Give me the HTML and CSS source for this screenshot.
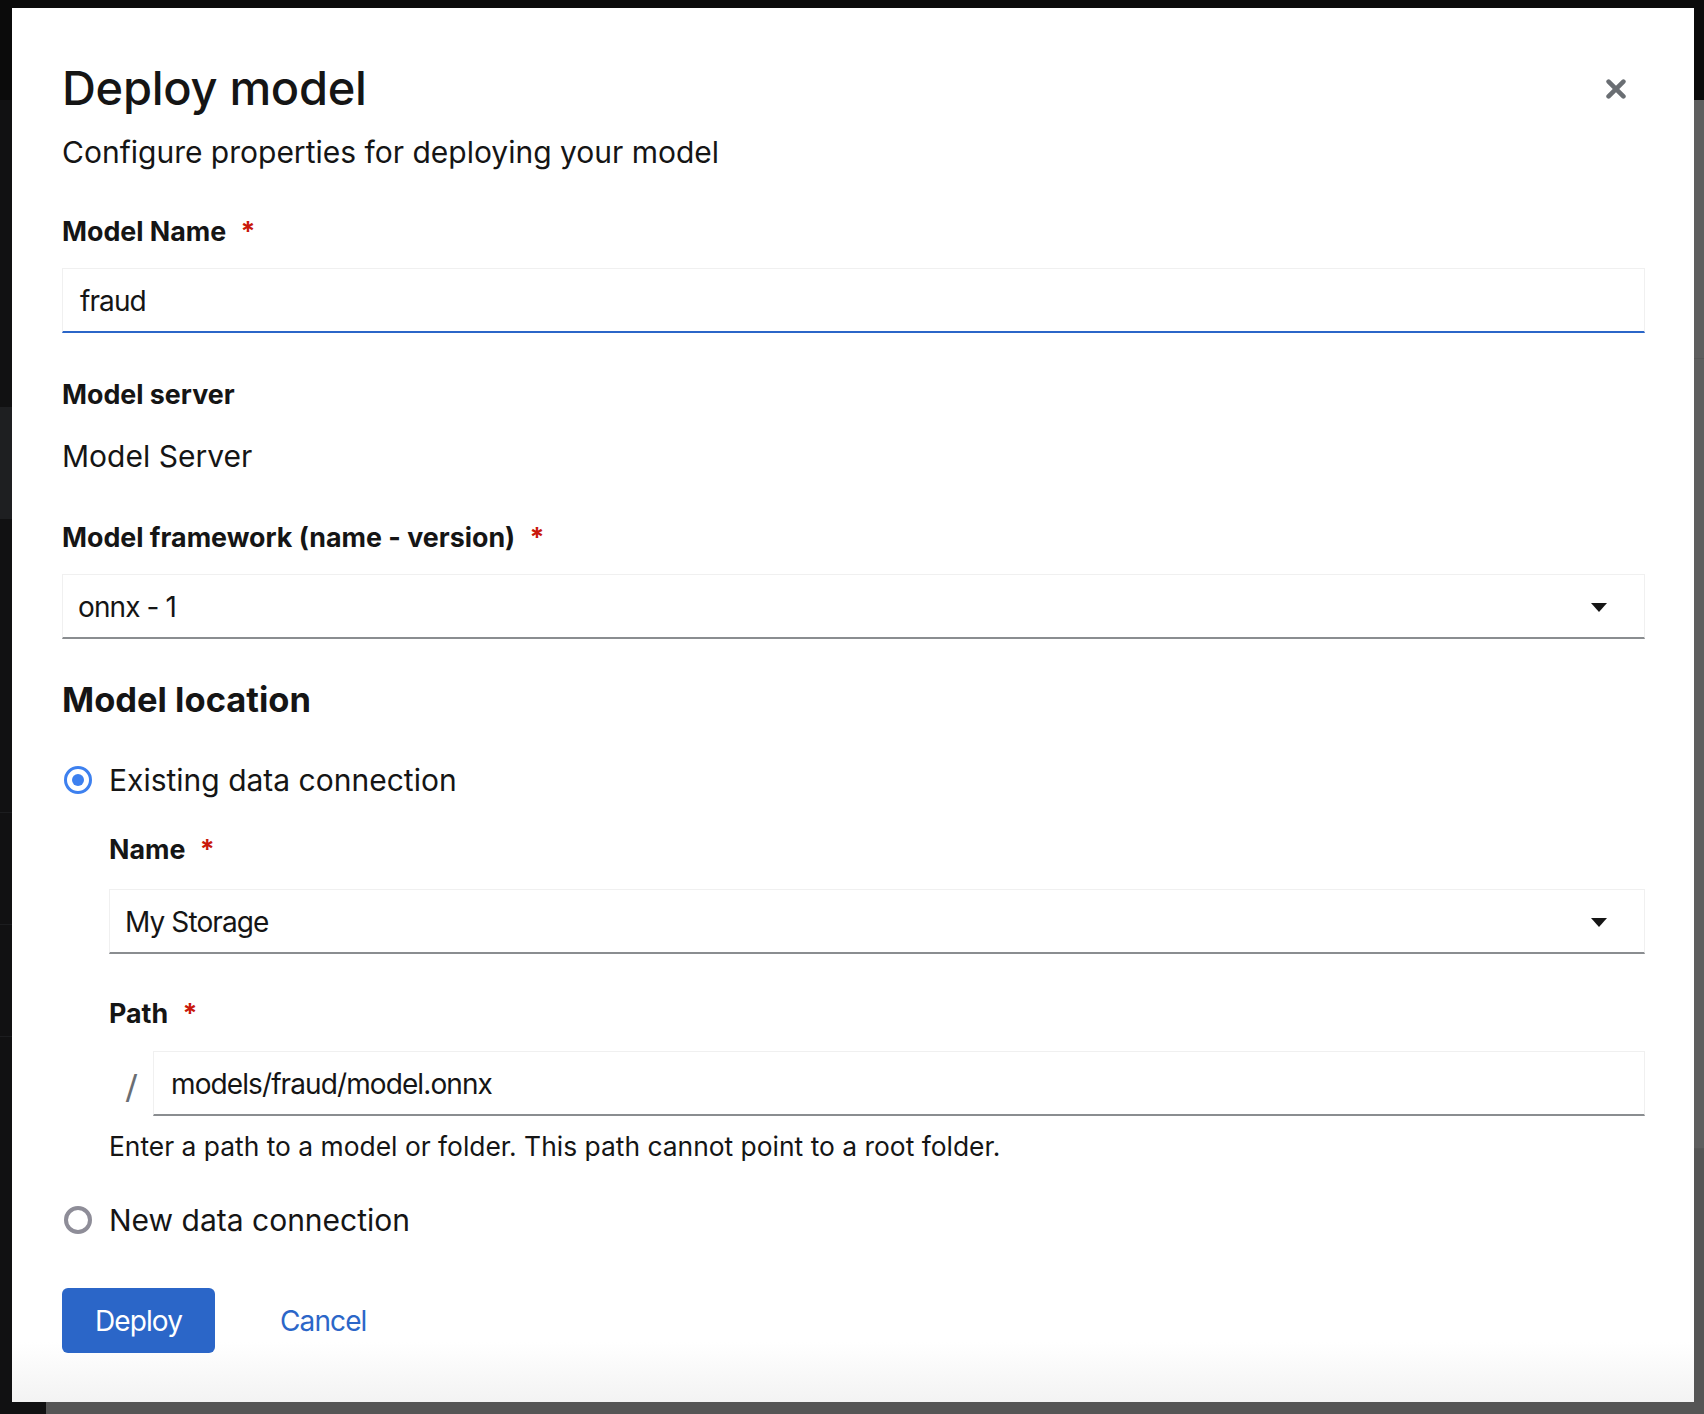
FILE: index.html
```html
<!DOCTYPE html>
<html lang="en">
<head>
<meta charset="utf-8">
<title>Deploy model</title>
<link rel="stylesheet" href="styles.css">
</head>
<body>
<div class="backdrop">
  <div class="topbar"></div>
  <div class="main">
    <div class="sidebar">
      <div class="nav-gap"></div>
      <div class="nav-active"></div>
      <div class="nav-gap2"></div>
      <div class="nav-item"></div>
      <div class="nav-item"></div>
    </div>
    <div class="content">
      <div class="row-a"></div>
      <div class="row-b"></div>
      <div class="row-c"></div>
    </div>
  </div>
</div>

<div class="modal" role="dialog" aria-labelledby="modal-title">
  <header class="modal-header">
    <div class="heading-block">
      <h1 class="modal-title" id="modal-title">Deploy model</h1>
      <p class="modal-desc">Configure properties for deploying your model</p>
    </div>
    <button class="close-btn" aria-label="Close">
      <svg width="20" height="20" viewBox="0 0 20 20"><path d="M2.6 2.6 L17.4 17.4 M17.4 2.6 L2.6 17.4" stroke="#6a6e73" stroke-width="4.6" stroke-linecap="round" fill="none"/></svg>
    </button>
  </header>

  <div class="form">
    <div class="label label-first">Model Name <span class="req">*</span></div>
    <div class="field focused">fraud</div>

    <div class="label label-gap">Model server</div>
    <div class="static-text">Model Server</div>

    <div class="label label-gap">Model framework (name - version) <span class="req">*</span></div>
    <div class="field select">
      <span>onnx - 1</span>
      <svg class="caret" width="16" height="9" viewBox="0 0 16 9"><path d="M0 0 H16 L8 9 Z" fill="#151515"/></svg>
    </div>

    <h2 class="section-title">Model location</h2>

    <div class="radio-row radio-first">
      <span class="radio checked"></span>
      <span class="radio-label">Existing data connection</span>
    </div>

    <div class="nested">
      <div class="label nested-label">Name <span class="req">*</span></div>
      <div class="field select nested-select">
        <span>My Storage</span>
        <svg class="caret" width="16" height="9" viewBox="0 0 16 9"><path d="M0 0 H16 L8 9 Z" fill="#151515"/></svg>
      </div>

      <div class="label label-gap-path">Path <span class="req">*</span></div>
      <div class="path-row">
        <span class="slash">/</span>
        <div class="field path-field">models/fraud/model.onnx</div>
      </div>
      <div class="helper">Enter a path to a model or folder. This path cannot point to a root folder.</div>
    </div>

    <div class="radio-row radio-second">
      <span class="radio"></span>
      <span class="radio-label">New data connection</span>
    </div>

    <div class="actions">
      <button class="btn btn-primary">Deploy</button>
      <button class="btn btn-link">Cancel</button>
    </div>
  </div>
</div>
</body>
</html>
```

FILE: styles.css
```css
* { box-sizing: border-box; }

html, body {
  margin: 0;
  padding: 0;
}

body {
  width: 1704px;
  height: 1414px;
  overflow: hidden;
  position: relative;
  background: #0b0b0b;
  font-family: Inter, "Noto Sans", sans-serif;
  color: #151515;
}

/* ---------- page behind the backdrop ---------- */
.backdrop {
  display: flex;
  flex-direction: column;
  height: 100%;
}

.topbar {
  height: 100px;
  background: #0b0b0b;
}

.main {
  flex: 1;
  display: flex;
}

.sidebar {
  width: 46px;
  background: #111112;
  display: flex;
  flex-direction: column;
}

.nav-gap { height: 307px; }
.nav-active { height: 112px; background: #1e1f21; }
.nav-gap2 { height: 294px; border-bottom: 1px solid #1c1d1f; }
.nav-item { height: 112px; border-bottom: 1px solid #1c1d1f; }

.content {
  flex: 1;
  background: #5e5e5e;
  display: flex;
  flex-direction: column;
}

.row-a { height: 259px; border-bottom: 1px solid #575757; }
.row-b { height: 790px; border-bottom: 1px solid #575757; }
.row-c { flex: 1; background: #555555; }

/* ---------- modal ---------- */
.modal {
  position: absolute;
  left: 12px;
  top: 8px;
  width: 1682px;
  height: 1394px;
  padding: 50px 49px 49px 50px;
  background: linear-gradient(to bottom, #ffffff calc(100% - 60px), #f3f3f3 100%);
  display: flex;
  flex-direction: column;
}

.modal-header {
  display: flex;
  justify-content: space-between;
  align-items: flex-start;
}

.modal-title {
  margin: 0;
  font-size: 47px;
  line-height: 60px;
  font-weight: 500;
  letter-spacing: -0.3px;
}

.modal-desc {
  margin: 14px 0 0;
  font-size: 30px;
  line-height: 40px;
  font-weight: 400;
}

.close-btn {
  width: 40px;
  height: 40px;
  margin: 11px 9px 0 0;
  padding: 0;
  border: 0;
  background: transparent;
  display: flex;
  align-items: center;
  justify-content: center;
}

/* ---------- form ---------- */
.form {
  display: flex;
  flex-direction: column;
}

.label {
  font-size: 26.8px;
  line-height: 36px;
  font-weight: 700;
}

.label-first { margin-top: 41px; }
.label-gap { margin-top: 43px; }

.req {
  color: #c9190b;
  margin-left: 8px;
}

.field {
  height: 65px;
  margin-top: 19px;
  padding: 12px 17px 10px;
  border: 1px solid #f0f0f0;
  border-bottom: 2px solid #8a8d90;
  font-size: 28px;
  letter-spacing: -0.9px;
  line-height: 40px;
  background: #fff;
}

.field.focused {
  border-bottom-color: #2b66c8;
}

.select {
  display: flex;
  align-items: center;
  justify-content: space-between;
  padding-left: 15px;
  padding-right: 37px;
}

.static-text {
  margin-top: 24px;
  font-size: 30px;
  line-height: 40px;
}

.section-title {
  margin: 39px 0 0;
  font-size: 34.5px;
  line-height: 44px;
  font-weight: 700;
}

.radio-row {
  display: flex;
  align-items: center;
  height: 40px;
}

.radio-first { margin-top: 38px; }
.radio-second { margin-top: 36px; }

.radio {
  width: 28px;
  height: 28px;
  margin-left: 2px;
  margin-right: 17px;
  border-radius: 50%;
  border: 4px solid #8e8d98;
  background: #fff;
  display: flex;
  align-items: center;
  justify-content: center;
  flex: none;
}

.radio.checked {
  border: 3.8px solid #3d80ef;
}

.radio.checked::after {
  content: "";
  width: 12px;
  height: 12px;
  border-radius: 50%;
  background: #3d80ef;
}

.radio-label {
  font-size: 30px;
  line-height: 40px;
}

.nested {
  margin-left: 47px;
  display: flex;
  flex-direction: column;
}

.nested-label { margin-top: 31px; }
.nested-select { margin-top: 22px; }
.label-gap-path { margin-top: 41px; }

.path-row {
  display: flex;
  align-items: stretch;
  margin-top: 20px;
}

.slash {
  width: 44px;
  flex: none;
  display: flex;
  align-items: center;
  justify-content: center;
  font-family: "DejaVu Sans", sans-serif;
  font-size: 34px;
  font-weight: 400;
  color: #6a6e73;
  padding-top: 6px;
  padding-left: 1px;
}

.path-field {
  flex: 1;
  margin-top: 0;
}

.helper {
  margin-top: 12px;
  font-size: 26.4px;
  line-height: 36px;
}

.actions {
  display: flex;
  margin-top: 48px;
  gap: 32px;
}

.btn {
  height: 65px;
  padding: 0 33px;
  border: 0;
  border-radius: 6px;
  font-family: inherit;
  font-size: 28px;
  letter-spacing: -0.9px;
  line-height: 40px;
  background: transparent;
}

.btn-primary {
  background: #2b66c8;
  color: #fff;
}

.btn-link {
  color: #2b66c8;
}
```
